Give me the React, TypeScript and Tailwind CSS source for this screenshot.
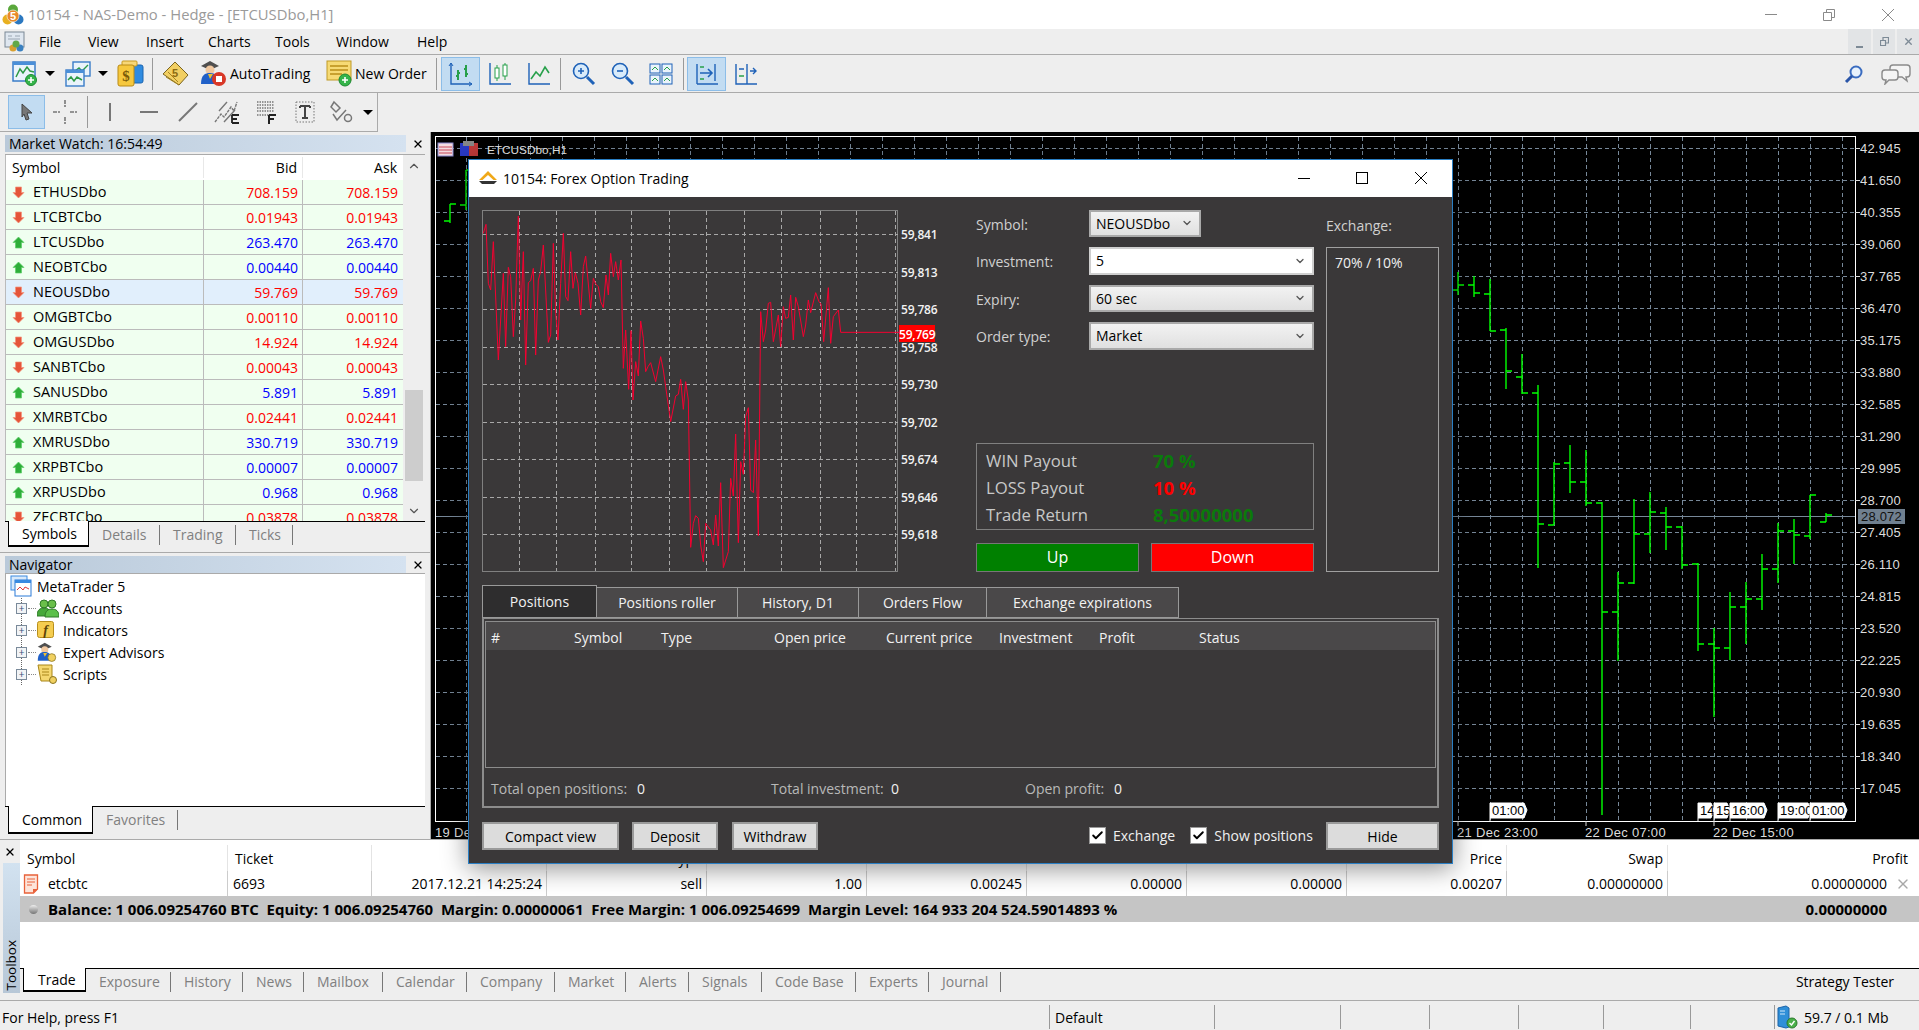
import { ChevronDown, ChevronUp, Check, X } from "lucide-react";

type Bar = [number, number, number, number, number];

const FONT = "font-['Open_Sans',sans-serif]";

const BARS: Bar[] = [
  [450, 204, 223, 221, 204],
  [466, 170, 210, 205, 170],
  [1458, 272, 295, 290, 285],
  [1474, 276, 297, 285, 293],
  [1490, 279, 331, 294, 331],
  [1506, 328, 389, 330, 371],
  [1522, 354, 394, 377, 393],
  [1538, 385, 568, 393, 524],
  [1554, 462, 525, 525, 464],
  [1570, 445, 493, 463, 482],
  [1586, 450, 506, 482, 503],
  [1602, 502, 815, 503, 612],
  [1618, 572, 661, 612, 583],
  [1634, 499, 584, 583, 534],
  [1650, 492, 553, 534, 512],
  [1666, 507, 550, 513, 527],
  [1682, 526, 569, 527, 565],
  [1698, 563, 651, 564, 644],
  [1714, 628, 717, 644, 648],
  [1730, 592, 660, 648, 607],
  [1746, 582, 644, 607, 599],
  [1762, 554, 610, 599, 569],
  [1778, 523, 583, 569, 531],
  [1794, 519, 564, 531, 535],
  [1810, 495, 539, 536, 495],
  [1826, 513, 522, 522, 515],
];

const PRICES = [
  "42.945", "41.650", "40.355", "39.060", "37.765", "36.470", "35.175",
  "33.880", "32.585", "31.290", "29.995", "28.700", "27.405", "26.110",
  "24.815", "23.520", "22.225", "20.930", "19.635", "18.340", "17.045",
];

const TAGS: [number, number, string][] = [
  [1490, 37, "01:00"],
  [1698, 16, "14"],
  [1714, 16, "15"],
  [1730, 37, "16:00"],
  [1778, 33, "19:00"],
  [1810, 37, "01:00"],
];

const SYMBOLS: [string, string, boolean][] = [
  ["ETHUSDbo", "708.159", false],
  ["LTCBTCbo", "0.01943", false],
  ["LTCUSDbo", "263.470", true],
  ["NEOBTCbo", "0.00440", true],
  ["NEOUSDbo", "59.769", false],
  ["OMGBTCbo", "0.00110", false],
  ["OMGUSDbo", "14.924", false],
  ["SANBTCbo", "0.00043", false],
  ["SANUSDbo", "5.891", true],
  ["XMRBTCbo", "0.02441", false],
  ["XMRUSDbo", "330.719", true],
  ["XRPBTCbo", "0.00007", true],
  ["XRPUSDbo", "0.968", true],
  ["ZECBTCbo", "0.03878", false],
];

const TICK_LINE =
  "40,280 48,253 55,430 62,450 70,305 85,660 100,400 107,620 115,382 122,410 130,590 137,480 145,228 152,540 160,335 167,675 175,428 182,422 190,385 197,645 205,420 212,395 220,315 235,607 242,585 250,310 257,520 264,600 272,430 280,280 287,470 294,482 302,335 309,445 316,398 324,430 332,525 340,380 347,348 362,505 370,415 377,432 385,440 392,485 400,503 408,405 415,465 422,340 430,410 437,365 445,420 453,360 460,685 467,570 476,748 483,572 489,780 497,665 505,708 512,543 520,595 527,695 534,680 542,668 557,725 572,650 580,690 587,740 602,845 617,768 625,763 632,718 640,808 647,725 655,780 662,1222 670,1150 677,1127 685,1135 692,1215 700,1265 707,1150 722,1170 730,1215 737,1125 745,1218 752,1028 760,1283 775,1235 782,1015 790,1068 797,882 805,1208 812,965 820,1003 827,830 835,803 842,1050 850,1058 857,900 865,1187 872,515 880,605 887,570 895,490 902,487 910,605 925,525 932,620 940,500 947,535 955,532 962,465 970,600 977,472 985,500 1000,590 1007,555 1015,480 1022,518 1037,458 1047,485 1053,492 1061,605 1075,443 1082,610 1090,530 1105,510 1112,577 1287,577";

const MINI_H = [234, 272, 309, 347, 384, 422, 459, 497, 534];
const MINI_V = [519, 556, 595, 631, 669, 706, 744, 781, 820, 856, 895];
const MINI_LABELS = ["59,841", "59,813", "59,786", "59,758", "59,730", "59,702", "59,674", "59,646", "59,618"];

function Dropdown() {
  return <span className="mx-[3px] h-0 w-0 border-x-[5px] border-t-[5px] border-x-transparent border-t-black" />;
}

function Sep({ gap = 5 }: { gap?: number }) {
  return <span className="h-[32px] w-px bg-[#999]" style={{ marginLeft: gap, marginRight: gap }} />;
}

function Logo() {
  return (
    <svg width="22" height="22" viewBox="0 0 22 22">
      <circle cx="5.500" cy="15.500" r="5" fill="#e8b020" />
      <circle cx="16.500" cy="15.500" r="5" fill="#2b78c0" />
      <circle cx="11" cy="5.500" r="5" fill="#5aa83c" />
      <circle cx="11" cy="12" r="6" fill="#e88a2a" stroke="#fff" strokeWidth=".6" />
      <text x="11" y="16" textAnchor="middle" fontSize="11" fontWeight="700" fill="#fff" fontFamily="Liberation Sans">5</text>
    </svg>
  );
}

function MenuLogo() {
  return (
    <svg width="22" height="22" viewBox="0 0 22 22">
      <rect x="1" y="1" width="19" height="15" fill="#dfe7f0" stroke="#7a8794" />
      <path d="M4 5h4M11 5h5M4 8h12" stroke="#9aa6b2" />
      <circle cx="9" cy="17" r="3.5" fill="#d8a030" />
      <circle cx="16" cy="17" r="3.5" fill="#3a80c0" />
      <circle cx="12" cy="13" r="3.5" fill="#60a848" />
    </svg>
  );
}

function PlusBadge({ cx, cy, r = 5.5 }: { cx: number; cy: number; r?: number }) {
  return (
    <g>
      <circle cx={cx} cy={cy} r={r} fill="#35b44a" stroke="#1e8a32" />
      <path d={`M${cx - 3} ${cy}h6M${cx} ${cy - 3}v6`} stroke="#fff" strokeWidth="1.6" />
    </g>
  );
}

function NewChartIcon() {
  return (
    <svg width="26" height="26" viewBox="0 0 26 26">
      <rect x="1" y="1" width="22" height="19" fill="#eaf3fb" stroke="#3a7cc8" strokeWidth="1.5" />
      <rect x="1" y="1" width="22" height="3" fill="#4a8fd8" />
      <path d="M4 16l4-8 3 4 4-6 3 4 4 1" fill="none" stroke="#2d9a46" strokeWidth="1.5" />
      <PlusBadge cx={19} cy={19} />
    </svg>
  );
}

function ProfilesIcon() {
  return (
    <svg width="26" height="26" viewBox="0 0 26 26">
      <rect x="8" y="1" width="17" height="14" fill="#eaf3fb" stroke="#3a7cc8" strokeWidth="1.4" />
      <path d="M10 10l4-3 3 3 6-6" fill="none" stroke="#2d9a46" strokeWidth="1.4" />
      <rect x="1" y="9" width="18" height="16" fill="#eaf3fb" stroke="#3a7cc8" strokeWidth="1.4" />
      <rect x="1" y="9" width="18" height="3" fill="#4a8fd8" />
      <path d="M3 19l3-3 3 4 3-4 5 3" fill="none" stroke="#2d9a46" strokeWidth="1.5" />
    </svg>
  );
}

function MarketIcon() {
  return (
    <svg width="27" height="27" viewBox="0 0 27 27">
      <rect x="10" y="5" width="16" height="18" rx="2" fill="#2f8be0" stroke="#1c64b0" />
      <rect x="5" y="1" width="15" height="5" rx="1" fill="#f7d778" stroke="#c89a20" />
      <rect x="1" y="5" width="16" height="21" rx="2" fill="#f6c83e" stroke="#b98a14" />
      <text x="9" y="21" textAnchor="middle" fontSize="15" fontWeight="700" fill="#7b5a08" fontFamily="Liberation Serif">$</text>
    </svg>
  );
}

function BookIcon() {
  return (
    <svg width="27" height="27" viewBox="0 0 27 27">
      <path d="M1 14L13 2l13 13-9 10z" fill="#f2cf62" stroke="#7a6420" />
      <path d="M4 17l13 8M6 12l10 10" stroke="#a58420" fill="none" />
      <text x="13" y="17" textAnchor="middle" fontSize="11" fontWeight="700" fill="#8c6a10" fontFamily="Liberation Sans">5</text>
    </svg>
  );
}

function RobotIcon({ size = 27, stop = true }: { size?: number; stop?: boolean }) {
  return (
    <svg width={size} height={size} viewBox="0 0 27 27">
      <path d="M1 6l9-5 9 5-9 4z" fill="#4f4f4f" />
      <circle cx="10" cy="10" r="4.5" fill="#f1c8a0" />
      <path d="M1 24c0-9 4-11 9-11s9 3 9 11z" fill="#2060c8" />
      <path d="M8 14l2 5 3-5z" fill="#f0c030" />
      {stop ? (
        <g>
          <circle cx="19" cy="19" r="7" fill="#d83828" />
          <rect x="16" y="16" width="6" height="6" fill="#fff" />
        </g>
      ) : (
        <circle cx="19" cy="20" r="5" fill="#f0d060" stroke="#8a7420" />
      )}
    </svg>
  );
}

function NewOrderIcon() {
  return (
    <svg width="27" height="27" viewBox="0 0 27 27">
      <rect x="1" y="1" width="24" height="19" fill="#f6da74" stroke="#bf9a26" />
      <path d="M4 6h18M4 10h18M4 14h12" stroke="#b98f18" strokeWidth="1.3" />
      <PlusBadge cx={19} cy={20} r={6} />
    </svg>
  );
}

function ChartBtn({ kind, active }: { kind: string; active?: boolean }) {
  const blue = "#1f62b8";
  const green = "#27a04a";
  return (
    <span className={`flex h-[34px] w-[39px] items-center justify-center border ${active ? "border-[#8cbde8] bg-[#c2dcf2]" : "border-transparent"}`}>
      <svg width="26" height="26" viewBox="0 0 26 26" fill="none">
        {kind === "bars" && (
          <g>
            <path d="M3 2v21h21" stroke={blue} strokeWidth="1.4" />
            <path d="M1 5l2-3 2 3M21 21l3 2-3 2" stroke={blue} />
            <path d="M10 9v10M8 15h2M10 12h2M18 4v12M16 8h2M18 13h2" stroke={green} strokeWidth="2" />
          </g>
        )}
        {kind === "candles" && (
          <g>
            <path d="M3 2v21h21" stroke={blue} strokeWidth="1.4" />
            <rect x="8" y="7" width="4" height="10" fill="#fff" stroke={green} />
            <rect x="16" y="4" width="4" height="11" fill="#fff" stroke={green} />
            <path d="M10 4v3M10 17v3M18 2v2M18 15v4" stroke={green} />
          </g>
        )}
        {kind === "line" && (
          <g>
            <path d="M3 2v21h21" stroke={blue} strokeWidth="1.4" />
            <path d="M5 18l5-7 4 4 5-9 4 6" stroke={green} strokeWidth="1.6" />
          </g>
        )}
        {kind === "zoomin" && (
          <g>
            <circle cx="11" cy="10" r="7.5" fill="#d9ebfa" stroke={blue} strokeWidth="1.6" />
            <path d="M8 10h6M11 7v6" stroke={blue} strokeWidth="1.6" />
            <path d="M17 16l7 7" stroke={blue} strokeWidth="3" />
          </g>
        )}
        {kind === "zoomout" && (
          <g>
            <circle cx="11" cy="10" r="7.5" fill="#d9ebfa" stroke={blue} strokeWidth="1.6" />
            <path d="M8 10h6" stroke={blue} strokeWidth="1.6" />
            <path d="M17 16l7 7" stroke={blue} strokeWidth="3" />
          </g>
        )}
        {kind === "tile" && (
          <g>
            <rect x="2" y="3" width="10" height="9" fill="#eaf3fb" stroke={blue} />
            <rect x="14" y="3" width="10" height="9" fill="#eaf3fb" stroke={blue} />
            <rect x="2" y="14" width="10" height="9" fill="#eaf3fb" stroke={blue} />
            <rect x="14" y="14" width="10" height="9" fill="#eaf3fb" stroke={blue} />
            <path d="M4 9l3-3 3 3M16 9l3-3 3 3M4 20l3-3 3 3M16 20l3-3 3 3" stroke={green} />
          </g>
        )}
        {kind === "scroll" && (
          <g>
            <path d="M3 3v20M3 23h21M21 3v17" stroke={blue} strokeWidth="1.4" />
            <path d="M6 12h12M14 8l4 4-4 4" stroke={blue} strokeWidth="1.6" />
            <path d="M6 6h4M6 18h4" stroke={green} strokeWidth="1.5" />
          </g>
        )}
        {kind === "shift" && (
          <g>
            <path d="M3 3v20h21M14 3v20" stroke={blue} strokeWidth="1.4" />
            <path d="M6 8h5M17 10h6M20 7l3 3-3 3" stroke={blue} strokeWidth="1.4" />
            <path d="M6 15h5" stroke={green} strokeWidth="1.5" />
          </g>
        )}
      </svg>
    </span>
  );
}

function DrawBtn({ children, w = 39 }: { children: React.ReactNode; w?: number }) {
  return (
    <span className="flex h-[34px] items-center justify-center" style={{ width: w }}>
      <svg width="28" height="28" viewBox="0 0 28 28" fill="none" stroke="#777">
        {children}
      </svg>
    </span>
  );
}

function ArrowMark({ up }: { up: boolean }) {
  return (
    <svg width="13" height="13" viewBox="0 0 13 13">
      {up ? (
        <path d="M6.500 1l5.500 5.500H9.500V12h-6V6.500H1z" fill="#2fae3a" stroke="#5fd068" strokeWidth=".7" strokeLinejoin="round" />
      ) : (
        <path d="M3.500 1h6v5.500H12L6.500 12 1 6.500h2.500z" fill="#e5553a" stroke="#f4957c" strokeWidth=".7" strokeLinejoin="round" />
      )}
    </svg>
  );
}

function PanelHeader({ title }: { title: string }) {
  return (
    <div className="flex h-[17px] items-center">
      <div className="flex h-full w-[401px] items-center bg-gradient-to-r from-[#b9c9d9] to-[#d5e2f0] pl-[4px] text-[14px] leading-none text-black">
        {title}
      </div>
      <X className="ml-[6px] h-[12px] w-[12px] text-black" strokeWidth={2.5} />
    </div>
  );
}

function TabStrip({
  first,
  tabs,
  height,
  firstPad = 13,
  right,
}: {
  first: [string, number];
  tabs: [string, number][];
  height: number;
  firstPad?: number;
  right?: string;
}) {
  return (
    <div className="flex border-t border-black pl-[3px] text-[14px]" style={{ height }}>
      <div
        className="-mt-px flex items-center border-x border-b-2 border-t-0 border-black bg-white text-black"
        style={{ width: first[1], paddingLeft: firstPad, height: height - 1 }}
      >
        {first[0]}
      </div>
      {tabs.map(([label, w]) => (
        <div key={label} className="my-[3px] flex items-center border-r border-[#777] pb-[2px] pl-[13px] text-[#808080]" style={{ width: w, height: 20 }}>
          {label}
        </div>
      ))}
      {right && <div className="ml-auto flex items-center pr-[25px] text-black">{right}</div>}
    </div>
  );
}

function MarketWatch() {
  return (
    <div className="flex h-[367px] w-[420px] overflow-hidden border-t border-[#aaa] bg-[#eee]">
      <div className="w-[398px] border-l border-[#bbb] text-[14px]">
        <div className="grid h-[25px] grid-cols-[198px_99px_100px] items-center bg-white text-black">
          <span className="border-r border-[#e8e8e8] pl-[6px]">Symbol</span>
          <span className="border-r border-[#e8e8e8] pr-[5px] text-right">Bid</span>
          <span className="pr-[6px] text-right">Ask</span>
        </div>
        {SYMBOLS.map(([name, value, up]) => (
          <div
            key={name}
            className={`grid h-[25px] grid-cols-[198px_99px_101px] items-center border-b border-[#bbb] ${name === "NEOUSDbo" ? "bg-[#e1effc]" : "bg-[#f0fff0]"}`}
          >
            <span className="flex h-full items-center gap-[8px] border-r border-[#bbb] pl-[6px] text-[14.5px] text-black">
              <ArrowMark up={up} />
              {name}
            </span>
            <span className={`flex h-full items-center justify-end border-r border-[#bbb] pr-[4px] ${up ? "text-[#0000ff]" : "text-[#ff0000]"}`}>{value}</span>
            <span className={`pr-[6px] text-right ${up ? "text-[#0000ff]" : "text-[#ff0000]"}`}>{value}</span>
          </div>
        ))}
      </div>
      <div className="flex w-[22px] flex-col items-center justify-between bg-[#eee] pb-[3px] pt-[4px]">
        <ChevronUp className="h-[14px] w-[14px] text-[#555]" strokeWidth={2} />
        <div className="mb-[23px] mt-auto h-[91px] w-[18px] bg-[#cdcdcd]" />
        <ChevronDown className="h-[14px] w-[14px] text-[#555]" strokeWidth={2} />
      </div>
    </div>
  );
}

function TreeRow({ label, icon }: { label: string; icon: React.ReactNode }) {
  return (
    <div className="flex h-[22px] items-center text-[14px] text-black">
      <span className="relative ml-[10px] flex h-[11px] w-[11px] items-center justify-center border border-[#7a8a9a] bg-[#f2f4f6] text-[10px] leading-none text-[#33507a]">
        +
        <span className="absolute -top-[6px] left-[4px] h-[5px] border-l border-dotted border-[#666]" />
        <span className="absolute -bottom-[6px] left-[4px] h-[5px] border-l border-dotted border-[#666]" />
      </span>
      <span className="ml-[1px] w-[8px] border-t border-dotted border-[#888]" />
      <span className="ml-[1px] flex w-[26px] items-center">{icon}</span>
      <span>{label}</span>
    </div>
  );
}

function Navigator() {
  return (
    <div className="h-[233px] w-[420px] overflow-hidden border-l border-t border-[#aaa] bg-white pt-[1px]">
      <div className="flex h-[22px] items-center text-[14px] text-black">
        <svg className="ml-[4px]" width="22" height="22" viewBox="0 0 22 22">
          <rect x="1" y="1" width="16" height="14" fill="#d8e9fa" stroke="#3a8ae0" />
          <rect x="5" y="5" width="16" height="16" fill="#fff" stroke="#2a7ad8" />
          <rect x="5" y="5" width="16" height="3" fill="#3a8ae0" />
          <path d="M7 15l3-3 3 3 2-3 4 2" stroke="#e03838" fill="none" />
        </svg>
        <span className="ml-[5px]">MetaTrader 5</span>
      </div>
      <TreeRow
        label="Accounts"
        icon={
          <svg width="22" height="20" viewBox="0 0 22 20">
            <circle cx="7" cy="6" r="4" fill="#6abf4a" stroke="#2f7a28" />
            <circle cx="15" cy="6" r="4" fill="#6abf4a" stroke="#2f7a28" />
            <path d="M0 18c0-6 3-8 7-8s7 2 7 8z" fill="#46a83a" stroke="#2f7a28" />
            <path d="M8 19c0-6 3-8 7-8s7 2 7 8z" fill="#5cc04a" stroke="#2f7a28" />
          </svg>
        }
      />
      <TreeRow
        label="Indicators"
        icon={
          <svg width="18" height="18" viewBox="0 0 18 18">
            <rect x=".5" y=".5" width="16" height="16" rx="2" fill="#f5cd50" stroke="#b88f1c" />
            <text x="8.5" y="14" textAnchor="middle" fontSize="14" fontStyle="italic" fontWeight="700" fontFamily="Liberation Serif" fill="#5c4408">f</text>
          </svg>
        }
      />
      <TreeRow label="Expert Advisors" icon={<RobotIcon size={21} stop={false} />} />
      <TreeRow
        label="Scripts"
        icon={
          <svg width="21" height="20" viewBox="0 0 21 20">
            <path d="M1 1h14v16H4z" fill="#f5d870" stroke="#a98618" />
            <path d="M5 5h7M5 8h7M5 11h7" stroke="#a98618" />
            <circle cx="16" cy="16" r="3.5" fill="#f0d060" stroke="#8a7420" />
          </svg>
        }
      />
    </div>
  );
}

function PriceChart() {
  const verts = Array.from({ length: 44 }, (_, i) => 1842 - i * 32).filter((x) => x > 436);
  const ticks = [
    [1458, "21 Dec 23:00"],
    [1586, "22 Dec 07:00"],
    [1714, "22 Dec 15:00"],
  ] as const;
  return (
    <svg className="block h-[707px] w-[1488px] bg-black" viewBox="431 132 1488 707" fontFamily="Liberation Sans" fontSize="13">
      <g stroke="#778899" strokeDasharray="4 3" shapeRendering="crispEdges">
        {PRICES.map((_, i) => (
          <line key={i} x1="436" x2="1855" y1={148.5 + i * 32} y2={148.5 + i * 32} />
        ))}
        {verts.map((x) => (
          <line key={x} x1={x + 0.5} x2={x + 0.5} y1="137" y2="821" />
        ))}
      </g>
      <line x1="436" x2="1855" y1="516.5" y2="516.5" stroke="#778899" />
      <path d="M435.5 136.5H1855.5V821.5H435.5z" fill="none" stroke="#fff" shapeRendering="crispEdges" />
      {BARS.map(([x, hi, lo, o, c]) => (
        <path key={x} d={`M${x} ${hi}V${lo}M${x - 6} ${o}H${x}M${x} ${c}H${x + 6}`} stroke="#00ff00" strokeWidth="1.4" fill="none" />
      ))}
      {PRICES.map((p, i) => (
        <g key={p}>
          <line x1="1855" x2="1860" y1={148.5 + i * 32} y2={148.5 + i * 32} stroke="#ddd" />
          <text x="1860" y={153 + i * 32} fill="#ddd" letterSpacing=".2">{p}</text>
        </g>
      ))}
      <rect x="1858" y="509" width="47" height="15" fill="#708090" />
      <text x="1861" y="521" fill="#111" letterSpacing=".2">28.072</text>
      {TAGS.map(([x, w, t]) => (
        <g key={x}>
          <path d={`M${x} 821V803H${x + w - 3}L${x + w} 810L${x + w - 3} 818H${x}`} fill="#fff" stroke="#fff" />
          <text x={x + 2} y="815" fill="#000">{t}</text>
        </g>
      ))}
      {ticks.map(([x, t]) => (
        <g key={x}>
          <line x1={x} x2={x} y1="821" y2="826" stroke="#ddd" />
          <text x={x - 1} y="837" fill="#ddd" letterSpacing=".3">{t}</text>
        </g>
      ))}
      <text x="435" y="837" fill="#ddd" letterSpacing=".3">19 Dec</text>
      <g>
        <rect x="438" y="143" width="15" height="13" fill="#f3dce0" stroke="#8a8ad0" />
        <path d="M439 147h13M439 150h13M439 153h13" stroke="#c84a5a" />
        <rect x="460" y="143" width="9" height="13" fill="#2a3ac8" />
        <rect x="469" y="143" width="9" height="13" fill="#c03a3a" />
        <rect x="463" y="141" width="11" height="5" fill="#888" />
      </g>
      <text x="487" y="154" fill="#eee" fontSize="11.8">ETCUSDbo,H1</text>
    </svg>
  );
}

function MiniChart() {
  return (
    <svg className="block h-[362px] w-[494px] shrink-0" viewBox="482 210 494 362" fontFamily="Open Sans" fontSize="12">
      <rect x="482.5" y="210.5" width="415" height="361" fill="none" stroke="#808080" />
      <g stroke="#a8a8a8" strokeDasharray="4 3" shapeRendering="crispEdges">
        {MINI_H.map((y) => (
          <line key={y} x1="483" x2="898" y1={y + 0.5} y2={y + 0.5} />
        ))}
        {MINI_V.map((x) => (
          <line key={x} x1={x + 0.5} x2={x + 0.5} y1="211" y2="571" />
        ))}
      </g>
      <g transform="translate(470 140) scale(.33333)">
        <polyline points={TICK_LINE} fill="none" stroke="#f50030" strokeWidth="3" strokeLinejoin="round" />
      </g>
      {MINI_LABELS.map((label, i) => (
        <text key={label} x="901" y={MINI_H[i] + 5} fill="#f2f2f2" fontWeight="600" letterSpacing="-.2">{label}</text>
      ))}
      <rect x="899" y="325" width="36" height="17" fill="#ff0000" />
      <text x="899" y="339" fill="#fff" fontWeight="600" letterSpacing="-.2">59,769</text>
    </svg>
  );
}

function SelectBox({ text, width, white, height }: { text: string; width: number; white?: boolean; height: number }) {
  return (
    <div
      className={`flex items-center justify-between border-2 border-[#a9a9a9] pl-[5px] pr-[6px] text-[14px] text-black ${white ? "border-[#cfcfcf] bg-white" : "bg-gradient-to-b from-[#f2f2f2] to-[#e0e0e0]"}`}
      style={{ width, height }}
    >
      <span>{text}</span>
      <ChevronDown className="h-[12px] w-[12px] text-[#555]" strokeWidth={2.5} />
    </div>
  );
}

function FormRow({ label, children, className }: { label: string; children: React.ReactNode; className?: string }) {
  return (
    <div className={`flex items-center ${className ?? ""}`}>
      <span className="w-[113px] pt-[2px] text-[14px] text-[#d0d0d0]">{label}</span>
      {children}
    </div>
  );
}

function DialogTab({ label, width, active }: { label: string; width: number; active?: boolean }) {
  return (
    <div
      className={`flex items-center justify-center border border-[#999] pt-[1px] text-[14px] text-[#f2f2f2] ${active ? "h-[33px] bg-[#2e2d2e]" : "h-[31px] border-l-0 bg-[#4a4849]"}`}
      style={{ width }}
    >
      {label}
    </div>
  );
}

function GrayButton({ label, width }: { label: string; width: number }) {
  return (
    <div className="flex h-[28px] items-center justify-center border-2 border-[#9a9a9a] bg-[#dcdcdc] pt-[1px] text-[14px] text-black" style={{ width }}>
      {label}
    </div>
  );
}

function CheckItem({ label }: { label: string }) {
  return (
    <div className="flex items-center gap-[7px] text-[14px] text-[#f0f0f0]">
      <span className="flex h-[17px] w-[17px] items-center justify-center border border-[#999] bg-white">
        <Check className="h-[13px] w-[13px] text-black" strokeWidth={3.5} />
      </span>
      {label}
    </div>
  );
}

function OptionDialog() {
  const cols: [string, number][] = [
    ["#", 83], ["Symbol", 87], ["Type", 113], ["Open price", 112], ["Current price", 113],
    ["Investment", 100], ["Profit", 100], ["Status", 100],
  ];
  return (
    <div className={`absolute left-[468px] top-[159px] flex h-[705px] w-[985px] flex-col border border-[#2a7fc4] bg-[#3a3839] shadow-[0_4px_24px_rgba(0,0,0,0.45)] ${FONT}`}>
      <div className="flex h-[37px] items-center bg-white pl-[9px] text-[14px] text-black">
        <svg width="20" height="16" viewBox="0 0 20 16">
          <path d="M10 1L1 10h3.5L10 5l5.500 5H19z" fill="#f0a818" />
          <path d="M1 11h18l-3 3H4z" fill="#333" />
        </svg>
        <span className="ml-[5px]">10154: Forex Option Trading</span>
        <div className="ml-auto flex items-center pr-[25px]">
          <span className="h-px w-[12px] bg-black" />
          <span className="ml-[46px] h-[12px] w-[12px] border border-black" />
          <svg className="ml-[47px]" width="12" height="12" viewBox="0 0 12 12" stroke="#000"><path d="M0 0l12 12M12 0L0 12" /></svg>
        </div>
      </div>
      <div className="flex h-[667px] flex-col px-[13px] pt-[13px]">
        <div className="flex h-[362px]">
          <MiniChart />
          <div className="flex w-[338px] flex-col">
            <FormRow label="Symbol:"><SelectBox text="NEOUSDbo" width={112} height={27} /></FormRow>
            <FormRow label="Investment:" className="mt-[10px]"><SelectBox text="5" width={225} height={28} white /></FormRow>
            <FormRow label="Expiry:" className="mt-[10px]"><SelectBox text="60 sec" width={225} height={27} /></FormRow>
            <FormRow label="Order type:" className="mt-[10px]"><SelectBox text="Market" width={225} height={28} /></FormRow>
            <div className="mt-[93px] grid h-[87px] grid-cols-[167px_1fr] content-center items-center gap-y-[1px] border border-[#808080] pl-[9px] pt-[3px] text-[16.700px] leading-[26px] text-[#c8c8c8]">
              <span>WIN Payout</span>
              <span className="text-[18.500px] font-bold text-[#0b7a0b]">70 %</span>
              <span>LOSS Payout</span>
              <span className="text-[18.500px] font-bold text-[#ff0000]">10 %</span>
              <span>Trade Return</span>
              <span className="text-[18.500px] font-bold text-[#0b7a0b]">8,50000000</span>
            </div>
            <div className="mt-[13px] flex justify-between">
              <div className="flex h-[29px] w-[163px] items-center justify-center border border-[#777] bg-[#008000] text-[16px] font-medium text-white">Up</div>
              <div className="flex h-[29px] w-[163px] items-center justify-center border border-[#777] bg-[#ff0000] text-[16px] font-medium text-white">Down</div>
            </div>
          </div>
          <div className="ml-[12px] flex w-[113px] flex-col">
            <div className="flex h-[37px] items-start pt-[5px] text-[14px] text-[#d0d0d0]">Exchange:</div>
            <div className="flex-1 border border-[#a0a0a0] pl-[8px] pt-[4px] text-[14px] text-[#f0f0f0]">70% / 10%</div>
          </div>
        </div>
        <div className="mt-[13px] flex h-[33px] items-end">
          <DialogTab label="Positions" width={115} active />
          <DialogTab label="Positions roller" width={141} />
          <DialogTab label="History, D1" width={121} />
          <DialogTab label="Orders Flow" width={128} />
          <DialogTab label="Exchange expirations" width={192} />
        </div>
        <div className="flex h-[190px] flex-col border-2 border-t border-[#8c8c8c] px-[1px] pt-[2px]">
          <div className="h-[147px] border border-[#8c8c8c]">
            <div className="flex h-[28px] items-center bg-[#4a4849] pl-[5px] pt-[3px] text-[14px] text-[#f2f2f2]">
              {cols.map(([label, w]) => (
                <span key={label} style={{ width: w }}>{label}</span>
              ))}
            </div>
          </div>
          <div className="flex flex-1 items-center pl-[6px] pt-[4px] text-[14px] text-[#b8b8b8]">
            <span className="w-[146px]">Total open positions:</span>
            <span className="w-[134px] text-[#f0f0f0]">0</span>
            <span className="w-[120px]">Total investment:</span>
            <span className="w-[134px] text-[#f0f0f0]">0</span>
            <span className="w-[89px]">Open profit:</span>
            <span className="text-[#f0f0f0]">0</span>
          </div>
        </div>
        <div className="mt-[14px] flex items-center">
          <GrayButton label="Compact view" width={137} />
          <span className="ml-[13px]"><GrayButton label="Deposit" width={86} /></span>
          <span className="ml-[14px]"><GrayButton label="Withdraw" width={86} /></span>
          <span className="ml-[271px]"><CheckItem label="Exchange" /></span>
          <span className="ml-[15px]"><CheckItem label="Show positions" /></span>
          <span className="ml-auto"><GrayButton label="Hide" width={113} /></span>
        </div>
      </div>
    </div>
  );
}

function Toolbox() {
  const cols = "grid-cols-[208px_144px_175px_160px_160px_160px_160px_160px_160px_161px_1fr]";
  const head = ["Symbol", "Ticket", "Time", "Type", "Volume", "Price", "S / L", "T / P", "Price", "Swap", "Profit"];
  const row = ["etcbtc", "6693", "2017.12.21 14:25:24", "sell", "1.00", "0.00245", "0.00000", "0.00000", "0.00207", "0.00000000", "0.00000000"];
  return (
    <div className="flex h-[161px] border-t border-[#aaa]">
      <div className="flex w-[20px] flex-col items-start">
        <X className="ml-[4px] mt-[6px] h-[12px] w-[12px] text-black" strokeWidth={2.5} />
        <div className="ml-[3px] mt-[5px] flex w-[17px] flex-1 items-end justify-center bg-gradient-to-b from-[#d2e2f0] to-[#b7c7d7] pb-[2px]">
          <span className="rotate-180 text-[13.5px] leading-none text-black [writing-mode:vertical-rl]">Toolbox</span>
        </div>
        <div className="h-[7px]" />
      </div>
      <div className="flex flex-1 flex-col bg-white pt-[5px]">
        <div className={`grid h-[26px] items-center text-[14px] text-black ${cols}`}>
          {head.map((h, i) => (
            <span key={i} className={`flex h-full items-center border-r border-[#e4e4e4] ${i < 2 ? "pl-[7px]" : "justify-end pr-[4px]"} ${i === 10 ? "border-r-0 pr-[11px]" : ""}`}>
              {h}
            </span>
          ))}
        </div>
        <div className={`grid h-[25px] items-center text-[14px] text-black ${cols}`}>
          {row.map((c, i) => (
            <span key={i} className={`flex h-full items-center border-r border-[#ccc] ${i === 0 ? "pl-[3px]" : i === 1 ? "pl-[5px]" : "justify-end pr-[4px]"} ${i === 10 ? "border-r-0 pr-[8px]" : ""}`}>
              {i === 0 && (
                <svg className="mr-[8px]" width="17" height="20" viewBox="0 0 17 20">
                  <path d="M1.500 1h13v14l-4 4h-9z" fill="#fde4da" stroke="#e8623a" strokeWidth="1.3" />
                  <path d="M4 5h8M4 8h8M4 11h5" stroke="#e8623a" />
                  <path d="M10 19v-4h5z" fill="#e8623a" />
                </svg>
              )}
              {c}
              {i === 10 && <X className="ml-[8px] h-[16px] w-[16px] text-[#a8a8a8]" strokeWidth={2} />}
            </span>
          ))}
        </div>
        <div className="flex h-[26px] items-center bg-[#c5c5c5] pl-[9px] text-[15px] font-bold text-black">
          <span className="h-[9px] w-[9px] rounded-full bg-gradient-to-b from-[#eee] to-[#777]" />
          <span className="ml-[10px] whitespace-pre">Balance: 1 006.09254760 BTC  Equity: 1 006.09254760  Margin: 0.00000061  Free Margin: 1 006.09254699  Margin Level: 164 933 204 524.59014893 %</span>
          <span className="ml-auto pr-[32px]">0.00000000</span>
        </div>
        <div className="flex-1" />
        <div className="h-[25px] bg-[#eee]">
          <TabStrip
            first={["Trade", 63]}
            firstPad={14}
            height={25}
            right="Strategy Tester"
            tabs={[
              ["Exposure", 85], ["History", 72], ["News", 61], ["Mailbox", 79], ["Calendar", 84], ["Company", 88],
              ["Market", 71], ["Alerts", 63], ["Signals", 73], ["Code Base", 94], ["Experts", 73], ["Journal", 72],
            ]}
          />
        </div>
        <div className="h-[7px] bg-[#eee]" />
      </div>
    </div>
  );
}

function StatusBar() {
  const widths = [165, 126, 89, 89, 85, 87, 84];
  return (
    <div className="flex h-[30px] items-center border-t border-[#aaa] bg-[#eee] pt-[3px] text-[14px] text-black">
      <span className="w-[1049px] pl-[2px]">For Help, press F1</span>
      {widths.map((w, i) => (
        <span key={i} className="flex h-[24px] items-center border-l border-[#999] pl-[5px]" style={{ width: w }}>
          {i === 0 ? "Default" : ""}
        </span>
      ))}
      <span className="flex h-[24px] flex-1 items-center border-l border-[#999] pl-[2px]">
        <svg width="21" height="24" viewBox="0 0 21 24">
          <path d="M1 3l8-2 3 2v19l-3 1-8-2z" fill="#2f8fd8" stroke="#1c64a8" />
          <path d="M3 6h5M3 9h5" stroke="#cfe7fa" />
          <circle cx="15" cy="18" r="5" fill="#4ab04a" stroke="#2a7a2a" />
          <path d="M12.500 18l2 2 3-4" stroke="#fff" fill="none" strokeWidth="1.4" />
        </svg>
        <span className="ml-[6px]">59.7 / 0.1 Mb</span>
      </span>
    </div>
  );
}

export default function App() {
  return (
    <div className={`relative flex h-[1030px] w-[1919px] flex-col overflow-hidden bg-[#eee] ${FONT}`}>
      <div className="flex h-[29px] items-center bg-white pl-[2px]">
        <Logo />
        <span className="ml-[4px] text-[14.800px] text-[#9a9a9a]">10154 - NAS-Demo - Hedge - [ETCUSDbo,H1]</span>
        <div className="ml-auto flex items-center pr-[25px]">
          <span className="h-px w-[12px] bg-[#8a8a8a]" />
          <svg className="ml-[46px]" width="12" height="12" viewBox="0 0 12 12" fill="none" stroke="#8a8a8a">
            <path d="M.5 3.500h8v8h-8zM3.500 3.500v-3h8v8h-3" />
          </svg>
          <svg className="ml-[47px]" width="12" height="12" viewBox="0 0 12 12" stroke="#8a8a8a"><path d="M0 0l12 12M12 0L0 12" /></svg>
        </div>
      </div>
      <div className="flex h-[26px] items-center border-b border-[#aaa] pl-[4px] text-[14px] text-black">
        <MenuLogo />
        <span className="ml-[13px] w-[49px]">File</span>
        <span className="w-[58px]">View</span>
        <span className="w-[62px]">Insert</span>
        <span className="w-[67px]">Charts</span>
        <span className="w-[61px]">Tools</span>
        <span className="w-[81px]">Window</span>
        <span>Help</span>
        <div className="ml-auto flex h-full gap-[2px] text-[#7d8a96]">
          <span className="flex w-[23px] items-end justify-center bg-[#e2e4e6] pb-[6px]"><span className="h-[2px] w-[7px] bg-[#7d8a96]" /></span>
          <span className="flex w-[22px] items-center justify-center bg-[#e2e4e6]">
            <svg width="9" height="9" viewBox="0 0 9 9" fill="none" stroke="#7d8a96" strokeWidth="1.2"><path d="M.5 3.500h5v5h-5zM3 3V.5h5.500V6H6" /></svg>
          </span>
          <span className="flex w-[22px] items-center justify-center bg-[#e2e4e6]"><X className="h-[11px] w-[11px]" strokeWidth={3} /></span>
        </div>
      </div>
      <div className="flex h-[38px] items-center border-b border-[#aaa] pl-[12px] text-[14px] text-black">
        <NewChartIcon />
        <span className="ml-[4px] flex items-center"><Dropdown /></span>
        <span className="ml-[7px]"><ProfilesIcon /></span>
        <span className="ml-[4px] flex items-center"><Dropdown /></span>
        <span className="ml-[6px]"><MarketIcon /></span>
        <span className="ml-[3px] flex items-center"><Sep /></span>
        <span className="ml-[4px]"><BookIcon /></span>
        <span className="ml-[11px]"><RobotIcon /></span>
        <span className="ml-[3px] w-[82px] whitespace-nowrap">AutoTrading</span>
        <span className="ml-[14px]"><NewOrderIcon /></span>
        <span className="ml-[2px] w-[72px] whitespace-nowrap">New Order</span>
        <span className="ml-[5px] flex items-center"><Sep gap={4} /></span>
        <ChartBtn kind="bars" active />
        <ChartBtn kind="candles" />
        <ChartBtn kind="line" />
        <Sep gap={2} />
        <ChartBtn kind="zoomin" />
        <ChartBtn kind="zoomout" />
        <ChartBtn kind="tile" />
        <Sep gap={3} />
        <ChartBtn kind="scroll" active />
        <ChartBtn kind="shift" />
        <div className="ml-auto flex items-center pr-[8px]">
          <svg width="20" height="20" viewBox="0 0 20 20" fill="none">
            <circle cx="12" cy="8" r="5.500" fill="#e8f2fc" stroke="#3a6cc0" strokeWidth="2" />
            <path d="M8 12l-6 6" stroke="#2a55a8" strokeWidth="3" />
          </svg>
          <svg className="ml-[17px]" width="30" height="22" viewBox="0 0 30 22" fill="#f4f4f4" stroke="#8a8a8a" strokeWidth="1.4">
            <path d="M12 2h14a3 3 0 013 3v6a3 3 0 01-3 3h-1l1 4-5-4h-9a3 3 0 01-3-3V5a3 3 0 013-3z" />
            <path d="M4 7h10a3 3 0 013 3v4a3 3 0 01-3 3H8l-4 4 1-4H4a3 3 0 01-3-3v-4a3 3 0 013-3z" />
          </svg>
        </div>
      </div>
      <div className="flex h-[39px] w-[378px] items-center border-b border-r border-[#aaa] pl-[8px]">
        <span className="flex h-[34px] w-[37px] items-center justify-center border border-[#8cbde8] bg-[#c2dcf2]">
          <svg width="16" height="18" viewBox="0 0 16 18"><path d="M3 1l10 9H8l2 6-3 1-2-6-2 3z" fill="#777" stroke="#444" /></svg>
        </span>
        <DrawBtn>
          <path d="M14 2v7M14 19v7M2 14h7M19 14h7" strokeWidth="1.6" strokeDasharray="4 1" />
        </DrawBtn>
        <span className="ml-[3px] mr-[2px] h-[32px] w-px bg-[#999]" />
        <DrawBtn><path d="M14 5v18" strokeWidth="2" /></DrawBtn>
        <DrawBtn><path d="M5 14h18" strokeWidth="2" /></DrawBtn>
        <DrawBtn><path d="M5 23L23 5" strokeWidth="2" /></DrawBtn>
        <DrawBtn>
          <path d="M2 24l6-8 3 3 7-10 3 4 3-9" strokeWidth="1.4" strokeDasharray="3 1" />
          <path d="M6 13l8-9M11 24l11-12" strokeWidth="1.4" />
          <path d="M19 17h7M19 21h5M19 25h7M19 17v8" stroke="#222" strokeWidth="1.8" />
        </DrawBtn>
        <DrawBtn>
          <path d="M5 4h17M5 7h17M5 10h17M5 13h17M5 17h12" strokeWidth="1.6" strokeDasharray="1.500 1" />
          <path d="M17 17h7M17 21h5M17 17v9" stroke="#222" strokeWidth="2" />
        </DrawBtn>
        <DrawBtn>
          <rect x="5" y="4" width="18" height="20" strokeDasharray="1.500 1.500" />
          <path d="M9 8h10M14 8v12M11 20h6M9 8v2M19 8v2" stroke="#444" strokeWidth="2" />
        </DrawBtn>
        <DrawBtn w={36}>
          <path d="M6 4l6 6-4 4-5-5zM5 16l4 6 9-10" strokeWidth="1.5" />
          <circle cx="20" cy="20" r="3.500" strokeWidth="1.5" />
        </DrawBtn>
        <Dropdown />
      </div>
      <div className="flex h-[707px]">
        <div className="w-[431px] border-r border-[#aaa] pl-[5px] pt-[3px]">
          <PanelHeader title="Market Watch: 16:54:49" />
          <div className="h-[2px]" />
          <MarketWatch />
          <div className="w-[420px]">
            <TabStrip first={["Symbols", 81]} height={27} tabs={[["Details", 71], ["Trading", 76], ["Ticks", 57]]} />
          </div>
          <div className="-ml-[5px] mt-[4px] h-px bg-[#aaa]" />
          <div className="h-[3px]" />
          <PanelHeader title="Navigator" />
          <Navigator />
          <div className="w-[420px]">
            <TabStrip first={["Common", 85]} height={29} tabs={[["Favorites", 85]]} />
          </div>
        </div>
        <PriceChart />
      </div>
      <Toolbox />
      <StatusBar />
      <OptionDialog />
    </div>
  );
}
